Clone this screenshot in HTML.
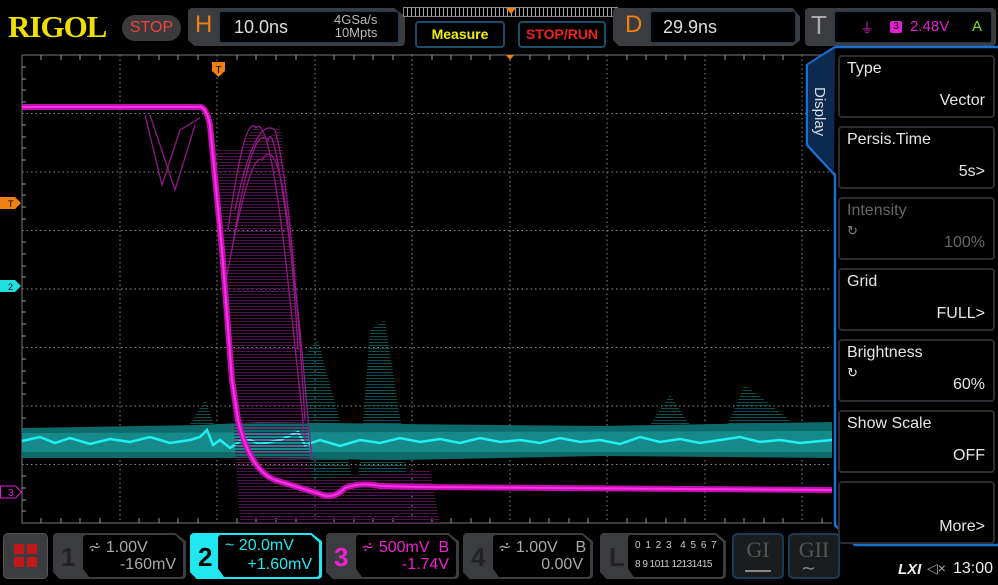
<!DOCTYPE html>
<html><head><meta charset="utf-8"><style>
*{margin:0;padding:0;box-sizing:border-box}
body{width:998px;height:585px;background:#000;overflow:hidden;position:relative;font-family:"Liberation Sans",sans-serif;color:#ddd}
.a{position:absolute}
.btn{position:absolute;left:838px;width:157px;height:63px;background:#000;border:2px solid #2a2e33;border-radius:4px}
.btn .t{position:absolute;left:7px;top:3px;font-size:16px;color:#e6e6e6}
.btn .v{position:absolute;right:8px;bottom:6px;font-size:16px;color:#e6e6e6}
.chb{position:absolute;top:533px;height:46px;background:#3a3c3f;border-radius:4px;clip-path:polygon(0 0,92% 0,100% 18%,100% 100%,5% 100%,0 85%)}
.chb .in{position:absolute;left:30px;top:2px;right:3px;bottom:2px;background:#000;border-radius:3px;clip-path:polygon(0 0,92% 0,100% 18%,100% 100%,6% 100%,0 80%)}
.chb .n{position:absolute;left:8px;top:9px;font-size:26px;font-weight:bold;color:#222}
.chb .l1,.chb .l2{position:absolute;font-size:16px;white-space:nowrap}
.chb .l1{top:4px;left:35px}.chb .l2{top:23px;right:10px}
</style></head><body>
<div class="a" style="left:8px;top:9px;font-family:'Liberation Serif',serif;font-weight:bold;font-size:31px;color:#f0e000;letter-spacing:-1px">RIGOL</div>
<div class="a" style="left:122px;top:15px;width:59px;height:26px;border-radius:13px;background:#3a3a3a;color:#f04040;font-size:16px;text-align:center;line-height:26px">STOP</div>
<div class="a" style="left:188px;top:8px;width:217px;height:38px;background:#3a3c3f;border-radius:4px;clip-path:polygon(0 0,95% 0,100% 22%,100% 100%,3% 100%,0 85%)"></div>
<div class="a" style="left:195px;top:11px;font-size:24px;color:#f08010">H</div>
<div class="a" style="left:219px;top:11px;width:180px;height:32px;background:#000;border:1px solid #1a3a50;border-radius:3px"></div>
<div class="a" style="left:234px;top:17px;font-size:18px;color:#ddd">10.0ns</div>
<div class="a" style="left:334px;top:13px;font-size:13px;color:#bbb;line-height:13px;text-align:right">4GSa/s<br>10Mpts</div>
<div class="a" style="left:403px;top:7px;width:215px;height:10px;border:1px solid #888;background:repeating-linear-gradient(90deg,#000 0 3px,#aaa 3px 4px)"></div>
<div class="a" style="left:506px;top:8px;width:0;height:0;border:5px solid transparent;border-top:6px solid #f08010"></div>
<div class="a" style="left:415px;top:21px;width:90px;height:27px;border:2px solid #1a4c6c;border-radius:4px;color:#f0f000;font-size:14px;font-weight:bold;text-align:center;line-height:23px">Measure</div>
<div class="a" style="left:518px;top:21px;width:88px;height:27px;border:2px solid #1a4c6c;border-radius:4px;color:#f02020;font-size:14px;font-weight:bold;text-align:center;line-height:23px">STOP/RUN</div>
<div class="a" style="left:613px;top:8px;width:187px;height:38px;background:#3a3c3f;border-radius:4px;clip-path:polygon(0 0,96% 0,100% 22%,100% 85%,96% 100%,3% 100%,0 85%)"></div>
<div class="a" style="left:625px;top:11px;font-size:24px;color:#f08010">D</div>
<div class="a" style="left:650px;top:11px;width:146px;height:32px;background:#000;border:1px solid #1a3a50;border-radius:3px"></div>
<div class="a" style="left:663px;top:17px;font-size:18px;color:#ddd">29.9ns</div>
<div class="a" style="left:805px;top:8px;width:191px;height:38px;background:#3a3c3f;border-radius:4px"></div>
<div class="a" style="left:811px;top:10px;font-size:26px;color:#aaa">T</div>
<div class="a" style="left:834px;top:11px;width:158px;height:32px;background:#000;border:1px solid #1a3a50;border-radius:3px"></div>
<div class="a" style="left:860px;top:18px;font-size:14px;color:#e020d0">⏚</div>
<div class="a" style="left:890px;top:21px;width:12px;height:12px;background:#e020d0;color:#000;font-size:10px;text-align:center;line-height:12px;border-radius:2px">3</div>
<div class="a" style="left:910px;top:18px;font-size:15px;color:#e020d0">2.48V</div>
<div class="a" style="left:972px;top:18px;font-size:15px;color:#80e020">A</div>

<svg class="a" style="left:0;top:0" width="998" height="585">
<defs><pattern id="h" width="4" height="3" patternUnits="userSpaceOnUse"><rect width="4" height="1" fill="#0a5050"/></pattern>
<pattern id="hm" width="4" height="3" patternUnits="userSpaceOnUse"><rect width="4" height="1" fill="#501048"/></pattern></defs>
<g stroke="#888" stroke-width="1" stroke-dasharray="1.5 3" fill="none">
<path d="M120 55V523M217 55V523M315 55V523M510 55V523M607 55V523M705 55V523M802 55V523"/>
<path d="M22 113.5H832M22 172H832M22 230.5H832M22 347.5H832M22 406H832M22 464.5H832"/>
</g>
<g stroke="#999" fill="none">
<path d="M412 55V523M22 289H832" stroke-dasharray="1.5 3"/>
<path d="M22 55V523H832M22 55H832" stroke="#777"/>
</g>
<g stroke="#999" stroke-width="1">
<path d="M41 55v5M61 55v5M80 55v5M100 55v5M139 55v5M159 55v5M178 55v5M198 55v5M237 55v5M256 55v5M276 55v5M296 55v5M334 55v5M354 55v5M373 55v5M393 55v5M432 55v5M451 55v5M471 55v5M490 55v5M530 55v5M549 55v5M569 55v5M588 55v5M627 55v5M646 55v5M666 55v5M685 55v5M725 55v5M744 55v5M764 55v5M783 55v5M822 55v5"/>
<path d="M41 523v-5M61 523v-5M80 523v-5M100 523v-5M139 523v-5M159 523v-5M178 523v-5M198 523v-5M237 523v-5M256 523v-5M276 523v-5M296 523v-5M334 523v-5M354 523v-5M373 523v-5M393 523v-5M432 523v-5M451 523v-5M471 523v-5M490 523v-5M530 523v-5M549 523v-5M569 523v-5M588 523v-5M627 523v-5M646 523v-5M666 523v-5M685 523v-5M725 523v-5M744 523v-5M764 523v-5M783 523v-5M822 523v-5"/>
<path d="M22 67h4M22 79h4M22 90h4M22 102h4M22 125h4M22 137h4M22 148h4M22 160h4M22 184h4M22 195h4M22 207h4M22 219h4M22 242h4M22 254h4M22 266h4M22 277h4M22 301h4M22 312h4M22 324h4M22 336h4M22 359h4M22 371h4M22 383h4M22 394h4M22 418h4M22 429h4M22 441h4M22 453h4M22 476h4M22 488h4M22 500h4M22 511h4"/>
</g>
<path d="M290 523L300 360 L318 340 L345 440 L360 523Z M355 523L370 330 L385 320 L405 450 L410 523Z M180 440L205 400 L220 440Z M640 440L670 395 L700 440Z M720 440L745 385 L790 420 L800 440Z" fill="url(#h)"/>
<path d="M22 428 L200 425 L260 422 L400 424 L600 426 L832 422 L832 458 L600 456 L400 460 L260 458 L22 458Z" fill="#0c6a6a"/>
<path d="M22 433 L832 431 L832 452 L22 452Z" fill="#168a8a"/>
<polyline points="22,441 40,437 55,443 70,438 90,444 110,439 130,442 150,437 170,443 190,440 200,437 207,430 213,445 220,440 230,448 245,438 260,444 280,440 298,432 305,445 320,440 340,446 360,440 380,443 400,438 420,442 440,439 460,443 480,438 500,442 520,440 540,443 560,438 580,442 600,440 620,444 640,437 660,442 680,439 700,443 720,440 740,437 760,442 780,440 800,443 832,440" fill="none" stroke="#20f0f0" stroke-width="2.5"/>
<path d="M215 150 L240 150 L255 125 L268 140 L280 125 L295 250 L305 400 L315 523 L240 523 L225 300Z" fill="url(#hm)"/>
<path d="M300 480 L360 475 L430 470 L440 523 L300 523Z" fill="url(#hm)"/>
<g fill="none" stroke="#901a84" stroke-width="1.3">
<path d="M228 230 Q245 110 256 128 Q270 110 290 300 L305 440"/>
<path d="M232 250 Q252 120 268 140 Q275 110 300 330 L312 460"/>
<path d="M226 280 Q250 150 262 160 Q285 120 298 350"/>
<path d="M235 210 Q255 115 275 130 Q290 180 305 420"/>
<path d="M145 115 L162 185 L180 130 L200 118"/>
<path d="M150 115 L175 190 L195 125"/>
</g>
<path d="M22 107 L198 107 Q206 105 210 125 L222 250 L232 380 L238 420 Q250 470 275 480 L320 494 Q333 500 345 488 Q360 482 380 486 L420 487 L832 490" fill="none" stroke="#c010b0" stroke-width="6"/>
<path d="M22 107 L198 107 Q206 105 210 125 L222 250 L232 380 L238 420 Q250 470 275 480 L320 494 Q333 500 345 488 Q360 482 380 486 L420 487 L832 490" fill="none" stroke="#ff30e8" stroke-width="2"/>
<path d="M212 62h13v9l-6.5 6l-6.5-6z" fill="#f08010"/><text x="218.5" y="73" font-size="10" text-anchor="middle" fill="#000" font-family="Liberation Sans">T</text>
<path d="M0 197h15l6 6l-6 6h-15z" fill="#f08010"/><text x="8" y="207" font-size="9" fill="#000" font-family="Liberation Sans">T</text>
<path d="M0 280h15l6 6l-6 6h-15z" fill="#20e0e0"/><text x="8" y="290" font-size="9" fill="#000" font-family="Liberation Sans">2</text>
<path d="M0.5 486h15l6 6l-6 6h-15z" fill="#000" stroke="#e020d0"/><text x="8" y="496" font-size="10" fill="#e020d0" font-family="Liberation Sans">3</text>
<path d="M506 55h8l-4 5z" fill="#f08010"/>
</svg>

<svg class="a" style="left:800px;top:45px" width="198" height="505">
<path d="M35 2 H198 M35 2 L7 20 V100 L35 130 V480 L55 500 H198" fill="none" stroke="#1a70d0" stroke-width="2.5"/>
<path d="M35 3 L8 20 V99 L34 126 Z" fill="#0c2a50"/>
<text x="0" y="0" transform="translate(15,42) rotate(90)" font-size="15" fill="#ddd" font-family="Liberation Sans">Display</text>
</svg>
<div class="btn" style="top:55px"><div class="t">Type</div><div class="v">Vector</div></div>
<div class="btn" style="top:126px"><div class="t">Persis.Time</div><div class="v">5s&gt;</div></div>
<div class="btn" style="top:197px"><div class="t" style="color:#666">Intensity</div><div class="a" style="left:7px;top:24px;color:#888;font-size:13px">↻</div><div class="v" style="color:#666">100%</div></div>
<div class="btn" style="top:268px"><div class="t">Grid</div><div class="v">FULL&gt;</div></div>
<div class="btn" style="top:339px"><div class="t">Brightness</div><div class="a" style="left:7px;top:24px;color:#eee;font-size:13px">↻</div><div class="v">60%</div></div>
<div class="btn" style="top:410px"><div class="t">Show Scale</div><div class="v">OFF</div></div>
<div class="btn" style="top:481px"><div class="v">More&gt;</div></div>

<div class="a" style="left:3px;top:533px;width:45px;height:46px;background:#3a3c3f;border-radius:5px;border:1px solid #555"></div>
<div class="a" style="left:14px;top:544px;width:10px;height:10px;background:#c01818"></div>
<div class="a" style="left:27px;top:544px;width:10px;height:10px;background:#c01818"></div>
<div class="a" style="left:14px;top:557px;width:10px;height:10px;background:#c01818"></div>
<div class="a" style="left:27px;top:557px;width:10px;height:10px;background:#c01818"></div>

<div class="chb" style="left:53px;width:133px"><div class="in"></div><div class="n">1</div><div class="l1" style="color:#aaa">⩫ 1.00V</div><div class="l2" style="color:#aaa">-160mV</div></div>
<div class="chb" style="left:190px;width:132px;background:#20e8f0"><div class="in" style="left:28px"></div><div class="n" style="color:#000">2</div><div class="l1" style="color:#20e8f0">~ 20.0mV</div><div class="l2" style="color:#20e8f0">+1.60mV</div></div>
<div class="chb" style="left:326px;width:133px"><div class="in"></div><div class="n" style="color:#f020d0">3</div><div class="l1" style="color:#f020d0">⩫ 500mV&nbsp;&nbsp;B</div><div class="l2" style="color:#f020d0">-1.74V</div></div>
<div class="chb" style="left:463px;width:130px"><div class="in"></div><div class="n">4</div><div class="l1" style="color:#aaa">⩫ 1.00V&nbsp;&nbsp;&nbsp;&nbsp;B</div><div class="l2" style="color:#aaa">0.00V</div></div>
<div class="chb" style="left:600px;width:126px"><div class="in" style="left:28px"></div><div class="n" style="left:9px">L</div>
<div class="a" style="left:35px;top:7px;font-size:10px;color:#ccc;letter-spacing:1px">0 1 2 3 &nbsp;4 5 6 7</div>
<div class="a" style="left:35px;top:26px;font-size:10px;color:#ccc;letter-spacing:-0.5px">8 9 1011 12131415</div></div>
<div class="a" style="left:732px;top:533px;width:52px;height:46px;background:#1a1c1e;border:2px solid #1a3a55;border-radius:5px;color:#555;font-family:'Liberation Serif',serif;font-size:22px;text-align:center;line-height:30px">GI</div>
<div class="a" style="left:745px;top:564px;width:26px;height:8px;border-bottom:2px solid #888"></div>
<div class="a" style="left:788px;top:533px;width:52px;height:46px;background:#1a1c1e;border:2px solid #1a3a55;border-radius:5px;color:#555;font-family:'Liberation Serif',serif;font-size:22px;text-align:center;line-height:30px">GII</div>
<div class="a" style="left:801px;top:558px;font-size:18px;color:#888">∼</div>
<div class="a" style="left:898px;top:561px;font-size:15px;font-style:italic;font-weight:bold;color:#eee">LXI</div>
<div class="a" style="left:927px;top:560px;font-size:14px;color:#aaa">◁×</div>
<div class="a" style="left:953px;top:560px;font-size:16px;color:#eee">13:00</div>
</body></html>
